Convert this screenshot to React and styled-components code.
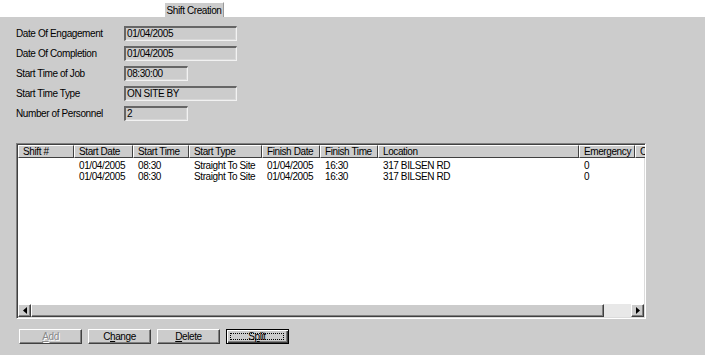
import React from 'react'
import styled, { createGlobalStyle } from 'styled-components'

const GlobalStyle = createGlobalStyle`
  html, body {
    margin: 0;
    padding: 0;
    background: #ffffff;
  }
  body {
    font-family: "Liberation Sans", Arial, sans-serif;
    font-size: 10px;
    letter-spacing: -0.4px;
    color: #000;
  }
`

const Window = styled.div`
  width: 707px;
  height: 358px;
  display: flex;
  flex-direction: column;
  background: #fff;
`

const TabStrip = styled.div`
  height: 17px;
  display: flex;
  align-items: flex-end;
  padding-left: 164px;
`

const Tab = styled.div`
  width: 60px;
  height: 15px;
  box-sizing: border-box;
  background: #cccccc;
  border-top: 1px solid #fff;
  border-left: 1px solid #fff;
  border-right: 1px solid #9a9a9a;
  display: flex;
  align-items: center;
  justify-content: center;
  white-space: nowrap;
`

const Panel = styled.div`
  width: 705px;
  height: 338px;
  box-sizing: border-box;
  background: #cccccc;
  display: flex;
  flex-direction: column;
  padding-top: 9px;
`

const Form = styled.div`
  display: grid;
  grid-template-columns: 108px auto;
  row-gap: 5px;
  padding-left: 16px;
`

const Label = styled.div`
  height: 15px;
  line-height: 15px;
  white-space: nowrap;
`

const Field = styled.div`
  width: ${({ $w }) => $w}px;
  height: 15px;
  box-sizing: border-box;
  border-top: 2px solid #666;
  border-left: 2px solid #666;
  border-right: 1px solid #f2f2f2;
  border-bottom: 1px solid #f2f2f2;
  box-shadow: inset -1px -1px 0 #d8d8d8;
  padding-left: 1px;
  line-height: 12px;
  white-space: nowrap;
`

const ListView = styled.div`
  margin: 22px 0 0 16px;
  width: 630px;
  height: 176px;
  box-sizing: border-box;
  border-top: 1px solid #808080;
  border-left: 1px solid #808080;
  border-right: 1px solid #fff;
  border-bottom: 1px solid #fff;
  box-shadow: inset 1px 1px 0 #404040, inset -1px -1px 0 #dcdcdc;
  padding: 1px;
  background: #fff;
  display: flex;
  flex-direction: column;
  overflow: hidden;
`

const HeaderRow = styled.div`
  display: flex;
  height: 13px;
  flex: none;
`

const HeaderCell = styled.div`
  width: ${({ $w }) => $w}px;
  flex: none;
  box-sizing: border-box;
  background: #cccccc;
  border-top: 1px solid #fff;
  border-left: 1px solid #fff;
  border-right: 1px solid #404040;
  border-bottom: 1px solid #404040;
  padding-left: 4px;
  line-height: 11px;
  white-space: nowrap;
  overflow: hidden;
`

const Body = styled.div`
  flex: 1;
  padding-top: 2px;
`

const Row = styled.div`
  display: flex;
  height: 11px;
`

const Cell = styled.div`
  width: ${({ $w }) => $w}px;
  flex: none;
  box-sizing: border-box;
  padding-left: 5px;
  line-height: 11px;
  white-space: nowrap;
  overflow: hidden;
`

const ScrollBar = styled.div`
  height: 13px;
  flex: none;
  display: flex;
  background: #e8e8e8;
`

const ArrowBtn = styled.div`
  width: 13px;
  height: 13px;
  flex: none;
  box-sizing: border-box;
  background: #cccccc;
  border-top: 1px solid #fff;
  border-left: 1px solid #fff;
  border-right: 1px solid #404040;
  border-bottom: 1px solid #404040;
  box-shadow: inset -1px -1px 0 #808080;
  display: flex;
  align-items: center;
  justify-content: center;
`

const Thumb = styled.div`
  width: 573px;
  flex: none;
  box-sizing: border-box;
  background: #cccccc;
  border-top: 1px solid #fff;
  border-left: 1px solid #fff;
  border-right: 1px solid #404040;
  border-bottom: 1px solid #404040;
  box-shadow: inset -1px -1px 0 #808080;
`

const Track = styled.div`
  flex: 1;
`

const ButtonRow = styled.div`
  display: flex;
  gap: 6px;
  padding-left: 19px;
  margin-top: 10px;
`

const Button = styled.div`
  width: 63px;
  height: 15px;
  box-sizing: border-box;
  background: #cccccc;
  border: 1px solid ${({ $default }) => ($default ? '#000' : 'transparent')};
  box-shadow: ${({ $default }) =>
    $default
      ? 'inset 1px 1px 0 #fff, inset -1px -1px 0 #404040, inset -2px -2px 0 #808080'
      : 'inset -1px -1px 0 #808080'};
  ${({ $default }) =>
    !$default &&
    `
    border-top-color: #fff;
    border-left-color: #fff;
    border-right-color: #404040;
    border-bottom-color: #404040;
  `}
  display: flex;
  align-items: center;
  justify-content: center;
  padding: 2px;
  color: ${({ $disabled }) => ($disabled ? '#8a8a8a' : '#000')};
  text-shadow: ${({ $disabled }) => ($disabled ? '1px 1px 0 #fff' : 'none')};
`

const FocusBox = styled.span`
  flex: 1;
  align-self: stretch;
  margin: 1px 2px 1px 1px;
  border: 1px dotted #000;
  display: flex;
  align-items: center;
  justify-content: center;
  line-height: 9px;
`

const U = styled.span`
  text-decoration: underline;
`

const columns = [
  { title: 'Shift #', w: 56 },
  { title: 'Start Date', w: 59 },
  { title: 'Start Time', w: 56 },
  { title: 'Start Type', w: 73 },
  { title: 'Finish Date', w: 58 },
  { title: 'Finish Time', w: 58 },
  { title: 'Location', w: 201 },
  { title: 'Emergency', w: 56 },
  { title: 'Comments', w: 80 },
]

const rows = [
  ['', '01/04/2005', '08:30', 'Straight To Site', '01/04/2005', '16:30', '317 BILSEN RD', '0', ''],
  ['', '01/04/2005', '08:30', 'Straight To Site', '01/04/2005', '16:30', '317 BILSEN RD', '0', ''],
]

const fields = [
  { label: 'Date Of Engagement', value: '01/04/2005', w: 113 },
  { label: 'Date Of Completion', value: '01/04/2005', w: 113 },
  { label: 'Start Time of Job', value: '08:30:00', w: 64 },
  { label: 'Start Time Type', value: 'ON SITE BY', w: 113 },
  { label: 'Number of Personnel', value: '2', w: 64 },
]

const App = () => {
  return (
    <Window>
      <GlobalStyle />
      <TabStrip>
        <Tab>Shift Creation</Tab>
      </TabStrip>
      <Panel>
        <Form>
          {fields.map((f) => (
            <React.Fragment key={f.label}>
              <Label>{f.label}</Label>
              <Field $w={f.w}>{f.value}</Field>
            </React.Fragment>
          ))}
        </Form>

        <ListView>
          <HeaderRow>
            {columns.map((c) => (
              <HeaderCell key={c.title} $w={c.w}>{c.title}</HeaderCell>
            ))}
          </HeaderRow>
          <Body>
            {rows.map((r, i) => (
              <Row key={i}>
                {r.map((v, j) => (
                  <Cell key={j} $w={columns[j].w}>{v}</Cell>
                ))}
              </Row>
            ))}
          </Body>
          <ScrollBar>
            <ArrowBtn>
              <svg width="4" height="7" viewBox="0 0 4 7">
                <path d="M4 0 L0 3.5 L4 7 Z" fill="#000" />
              </svg>
            </ArrowBtn>
            <Thumb />
            <Track />
            <ArrowBtn>
              <svg width="4" height="7" viewBox="0 0 4 7">
                <path d="M0 0 L4 3.5 L0 7 Z" fill="#000" />
              </svg>
            </ArrowBtn>
          </ScrollBar>
        </ListView>

        <ButtonRow>
          <Button $disabled><U>A</U>dd</Button>
          <Button>C<U>h</U>ange</Button>
          <Button><U>D</U>elete</Button>
          <Button $default><FocusBox>S<U>p</U>lit</FocusBox></Button>
        </ButtonRow>
      </Panel>
    </Window>
  )
}

export default App
